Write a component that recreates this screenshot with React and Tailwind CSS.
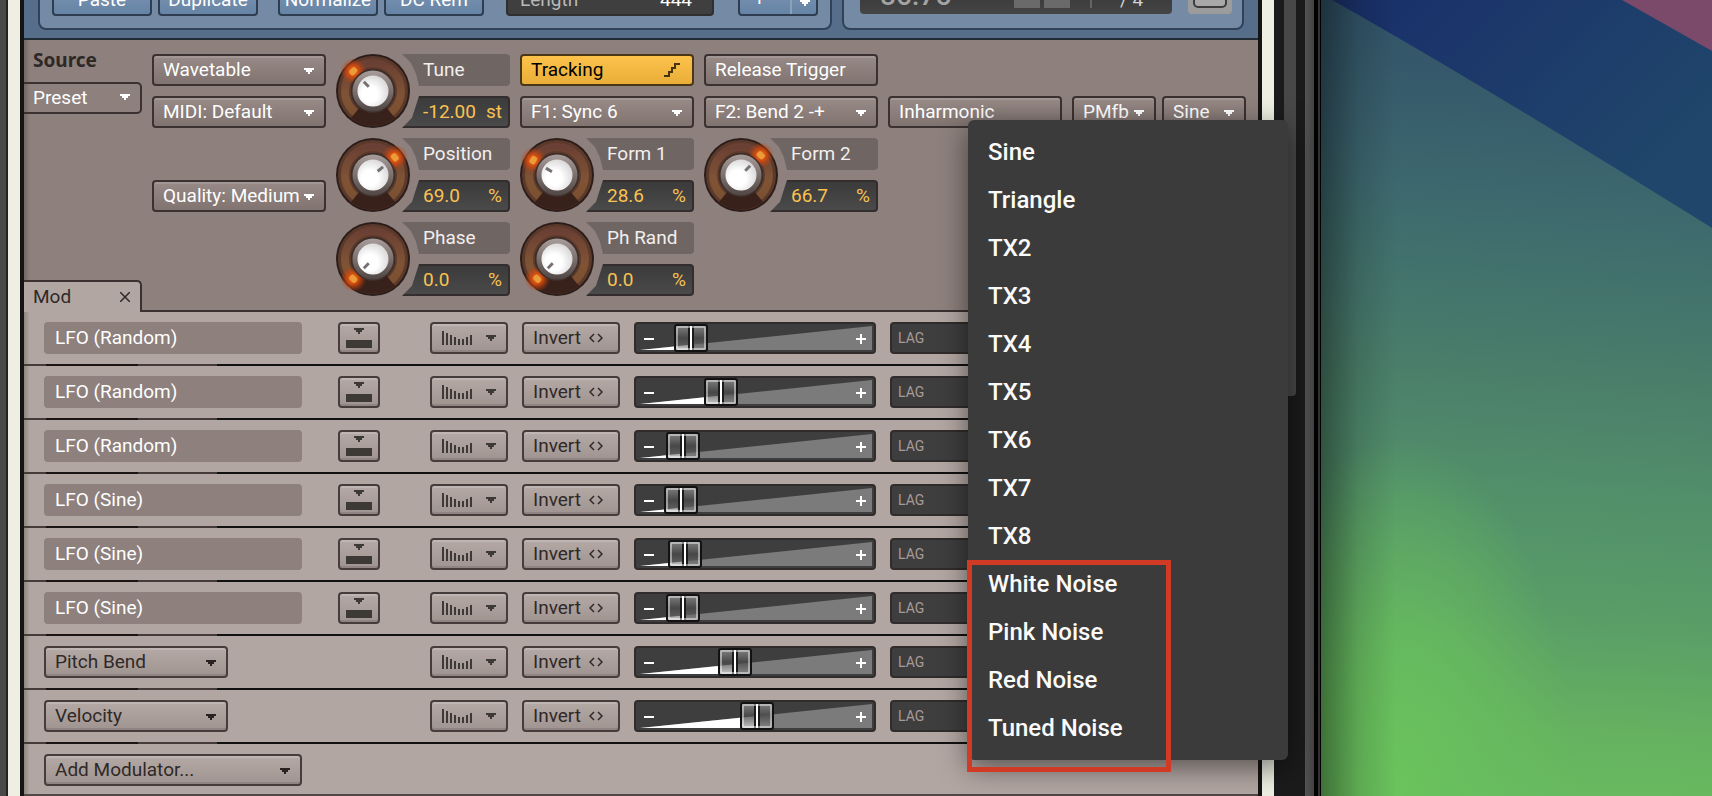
import React, { useState } from 'react';
import { clsx } from 'clsx';

const MENU_ITEMS = [
    'Sine', 'Triangle', 'TX2', 'TX3', 'TX4', 'TX5', 'TX6', 'TX7', 'TX8',
    'White Noise', 'Pink Noise', 'Red Noise', 'Tuned Noise',
];

// amount runs from 0 to 208, one step for each pixel of thumb travel
const MODULATORS = [
    { id: 'mod1', name: 'LFO (Random)', internal: true, amount: 40 },
    { id: 'mod2', name: 'LFO (Random)', internal: true, amount: 70 },
    { id: 'mod3', name: 'LFO (Random)', internal: true, amount: 32 },
    { id: 'mod4', name: 'LFO (Sine)', internal: true, amount: 30 },
    { id: 'mod5', name: 'LFO (Sine)', internal: true, amount: 34 },
    { id: 'mod6', name: 'LFO (Sine)', internal: true, amount: 32 },
    { id: 'mod7', name: 'Pitch Bend', internal: false, amount: 84 },
    { id: 'mod8', name: 'Velocity', internal: false, amount: 106 },
];

const DARK_BUTTON = 'rounded-[4px] border-2 border-[#3b3130] bg-linear-to-b from-[#978a87] to-[#807370] text-white shadow-[inset_0_2px_0_#ffffff1f]';
const LIGHT_BUTTON = 'rounded-[4px] border-2 border-[#463d3b] bg-linear-to-b from-[#b5a9a6] to-[#a09491] text-[#2f2927] shadow-[inset_0_2px_0_#ffffff26,inset_0_-2px_0_#0000001a]';

const Arrow = ({ className }) => (
    <svg className={className} width="10" height="6" viewBox="0 0 10 6" fill="currentColor" aria-hidden="true">
        <path d="M0 0H10V2H8V4H6V6H4V4H2V2H0Z" />
    </svg>
);

const Dropdown = ({ label, value, light, className }) => (
    <div className={clsx('relative h-8', className)}>
        <select
            aria-label={label}
            defaultValue={value}
            className={clsx('block h-8 w-full appearance-none pl-[9px] outline-none', light ? LIGHT_BUTTON : DARK_BUTTON)}
        >
            <option>{value}</option>
        </select>
        <Arrow className={clsx('pointer-events-none absolute right-3 top-[14px]', light ? 'text-[#2a2221]' : 'text-white')} />
    </div>
);

const KnobDial = ({ angle }) => {
    const rad = (angle * Math.PI) / 180;
    const x = 37 + 28 * Math.sin(rad);
    const y = 37 - 28 * Math.cos(rad);
    return (
        <svg className="relative z-10 shrink-0" width="74" height="74" viewBox="0 0 74 74" aria-hidden="true">
            <defs>
                <linearGradient id="ring" x1="0" y1="0" x2="0" y2="1">
                    <stop offset="0" stopColor="#6b4034" />
                    <stop offset="0.6" stopColor="#7f5435" />
                    <stop offset="1" stopColor="#7a4f30" />
                </linearGradient>
                <linearGradient id="collar" x1="0" y1="0" x2="0" y2="1">
                    <stop offset="0" stopColor="#a89d9b" />
                    <stop offset="1" stopColor="#4f4543" />
                </linearGradient>
                <radialGradient id="cap" cx="0.4" cy="0.6" r="0.65">
                    <stop offset="0.4" stopColor="#ffffff" />
                    <stop offset="1" stopColor="#d8d6d6" />
                </radialGradient>
                <radialGradient id="glow">
                    <stop offset="0" stopColor="#f58a28" />
                    <stop offset="0.4" stopColor="#dd4e0e" stopOpacity="0.9" />
                    <stop offset="1" stopColor="#c23a08" stopOpacity="0" />
                </radialGradient>
            </defs>
            <circle cx="37" cy="37" r="37" fill="#2c1d1a" />
            <circle cx="37" cy="37" r="28.5" fill="none" stroke="#5c3a2b" strokeWidth="13" />
            <circle cx="37" cy="37" r="28" fill="none" stroke="url(#ring)" strokeWidth="8" />
            <path d="M37 37L15 64A35 35 0 0 0 59 64Z" fill="#38211a" />
            <circle cx={x} cy={y} r="13" fill="url(#glow)" />
            <rect x={x - 4} y={y - 3} width="8" height="6" rx="2" fill="#eb9c38" transform={`rotate(${angle} ${x} ${y})`} />
            <circle cx="37" cy="37" r="22" fill="#3f302b" />
            <circle cx="37" cy="37" r="20.5" fill="url(#collar)" />
            <circle cx="37" cy="37" r="15.5" fill="url(#cap)" />
            <path d="M37 24V31" stroke="#777070" strokeWidth="3" transform={`rotate(${angle} 37 37)`} />
        </svg>
    );
};

const Knob = ({ id, label, value, unit, angle, className }) => (
    <div className={clsx('row-span-2 flex', className)}>
        <KnobDial angle={angle} />
        <div className="-ml-2 flex flex-1 flex-col gap-2.5">
            <label
                htmlFor={id}
                className="h-8 rounded-r-sm bg-[#6f6563] pl-[21px] leading-8 text-[#f2efee] [clip-path:polygon(0_0,100%_0,100%_100%,17px_100%,14px_62%,9px_28%)]"
            >
                {label}
            </label>
            <div className="flex h-8 items-center rounded-r-sm border-2 border-l-0 border-[#332e2d] bg-linear-to-b from-[#3b3b3b] to-[#4a4a4a] pl-[21px] pr-1.5 text-[#fac251] [clip-path:polygon(17px_0,100%_0,100%_100%,0_100%,10px_68%)]">
                <input id={id} defaultValue={value} className="w-0 flex-1 bg-transparent outline-none" />
                <span>{unit}</span>
            </div>
        </div>
    </div>
);

const AmountSlider = ({ name, initial }) => {
    const [amount, setAmount] = useState(initial);
    const x = amount + 17;
    const y = 28 - ((x - 6) * 24) / 232;
    return (
        <div className="relative h-8 rounded-sm border-2 border-[#302c2b] bg-[#3e3e3e]">
            <svg className="absolute -left-0.5 -top-0.5" width="242" height="32" viewBox="0 0 242 32" aria-hidden="true">
                <path d="M6 28L238 4V28Z" fill="#7b7b7b" />
                <path d={`M6 28L${x} ${y}V28Z`} fill="#fff" />
                <path d="M10 17H20M222 17H232M227 12V22" stroke="#fff" strokeWidth="2" />
            </svg>
            <input
                type="range"
                min="0"
                max="208"
                value={amount}
                onChange={(e) => setAmount(Number(e.target.value))}
                aria-label={`${name} amount`}
                className="absolute -left-0.5 -top-0.5 h-8 w-[242px] appearance-none bg-transparent outline-none [&::-webkit-slider-thumb]:h-7 [&::-webkit-slider-thumb]:w-[34px] [&::-webkit-slider-thumb]:appearance-none [&::-webkit-slider-thumb]:rounded-[3px] [&::-webkit-slider-thumb]:border-2 [&::-webkit-slider-thumb]:border-[#121212] [&::-webkit-slider-thumb]:bg-[linear-gradient(90deg,#0000_12px,#1a1a1a_12px_14px,#fff_14px_16px,#1a1a1a_16px_18px,#0000_18px),linear-gradient(180deg,#7e7e7e_0,#4a4a4acc_50%,#8c8c8c80_100%)] [&::-webkit-slider-thumb]:shadow-[inset_0_0_0_2px_#ffffff73]"
            />
        </div>
    );
};

const ModRow = ({ mod }) => (
    <div>
        <div className="grid grid-cols-[280px_78px_78px_98px_242px_1fr] gap-x-3.5 px-5 py-2.5">
            {mod.internal ? (
                <div className="h-8 w-[258px] rounded-sm bg-[#8d807d] pl-[11px] leading-8 text-white">{mod.name}</div>
            ) : (
                <Dropdown light label="Modulator" value={mod.name} className="w-46" />
            )}
            <div>
                {mod.internal && (
                    <button type="button" aria-label={`Show ${mod.name}`} className={clsx('flex h-8 w-[42px] flex-col items-center gap-1.5 pt-1', LIGHT_BUTTON)}>
                        <Arrow className="text-[#3d3935]" />
                        <span className="h-2 w-[26px] bg-[#3d3935]" />
                    </button>
                )}
            </div>
            <button type="button" aria-label="Shaper" className={clsx('flex h-8 items-center justify-between px-2.5', LIGHT_BUTTON)}>
                <svg width="30" height="14" viewBox="0 0 30 14" aria-hidden="true">
                    <path d="M1 14V0M5 14V2M9 14V4M13 14V6M17 14V8M21 14V8M25 14V6M29 14V4" stroke="#3d3935" strokeWidth="2" />
                </svg>
                <Arrow className="text-[#3d3935]" />
            </button>
            <button type="button" className={clsx('flex h-8 items-center gap-2 pl-[9px]', LIGHT_BUTTON)}>
                Invert
                <svg width="14" height="10" viewBox="0 0 14 10" fill="none" stroke="#2f2927" strokeWidth="1.5" aria-hidden="true">
                    <path d="M5 1L1 5L5 9M9 1L13 5L9 9" />
                </svg>
            </button>
            <AmountSlider name={mod.name} initial={mod.amount} />
            <div className="h-8 rounded-sm border-2 border-[#302c2b] bg-[#3e3e3e] pl-1.5 text-sm/7 text-[#a89b97]">LAG</div>
        </div>
        <div className="h-0.5 bg-[linear-gradient(90deg,#453c3a_22px,#1a1514_22px_114px,#453c3a_114px_193px,#111_193px)]" />
    </div>
);

const HeaderButton = ({ children }) => (
    <button type="button" className="h-8 w-25 rounded-[4px] border-2 border-[#2e3e50] bg-linear-to-b from-[#7d94b1] to-[#6684a6] text-white">
        {children}
    </button>
);

const Toolbar = () => (
    <header className="flex h-10 items-end gap-2.5 overflow-hidden border-b-2 border-[#222c37] bg-[#576e8b] pb-2 pl-3.5 pr-3.5">
        <div className="flex h-14 w-[794px] shrink-0 items-end rounded-lg border-2 border-[#2f4259] bg-[#758ba5] pb-3 pl-3">
            <div className="flex gap-1.5">
                <HeaderButton>Paste</HeaderButton>
                <HeaderButton>Duplicate</HeaderButton>
            </div>
            <div className="ml-5 flex gap-1.5">
                <HeaderButton>Normalize</HeaderButton>
                <HeaderButton>DC Rem</HeaderButton>
            </div>
            <div className="ml-[22px] flex h-8 w-[208px] items-center justify-between rounded-sm border-2 border-[#302f30] bg-[#3f3f3f] pl-3 pr-5 text-[#b9b9b9]">
                <span>Length</span>
                <span className="text-white">444</span>
            </div>
            <button type="button" aria-label="Zoom" className="ml-6 flex h-8 w-20 items-center justify-between rounded-[4px] border-2 border-[#2e3e50] bg-linear-to-b from-[#7d94b1] to-[#6684a6] pl-3.5 pr-1.5 text-white">
                <span>+</span>
                <span className="flex h-full items-end border-l-2 border-[#8ba0ba] pb-2 pl-2">
                    <Arrow />
                </span>
            </button>
        </div>
        <div className="flex h-14 flex-1 items-end justify-between rounded-lg border-2 border-[#2f4259] bg-[#758ba5] pb-3.5 pl-4 pr-2.5">
            <div className="flex h-10 w-[312px] items-end rounded-sm bg-linear-to-b from-[#2f2f2f] to-[#454545] pb-1.5 pl-5">
                <span className="w-[134px] text-[28px]/6 font-medium text-[#a3a3a3]">86.75</span>
                <span className="h-6 w-[26px] bg-[#6a6a6a]" />
                <span className="ml-1 h-6 w-[26px] bg-[#6a6a6a]" />
                <span className="ml-5 h-6 w-0.5 bg-[#656565]" />
                <span className="ml-7 leading-4 text-[#d0d0d0]">/ 4</span>
            </div>
            <button type="button" aria-label="Keyboard" className="flex h-8 w-11 items-end justify-center rounded-sm bg-[#9c9c9c] pb-1.5">
                <span className="h-6 w-[34px] rounded-[5px] border-2 border-[#3d3d3d] bg-[#a8a8a8]" />
            </button>
        </div>
    </header>
);

const WaveMenu = () => (
    <div className="absolute -left-[194px] top-6 z-20 w-80 rounded-md bg-[#3b3b3b] py-2 shadow-[0_8px_28px_#00000080]">
        <ul role="menu">
            {MENU_ITEMS.map((item) => (
                <li key={item} role="none">
                    <button type="button" role="menuitem" className="block h-12 w-full pl-5 text-left text-2xl font-medium text-[#fafafa]">
                        {item}
                    </button>
                </li>
            ))}
        </ul>
        {/* Highlight round the noise sources */}
        <div className="pointer-events-none absolute -left-px top-[440px] h-[212px] w-[204px] border-[5px] border-[#d13b25]" />
    </div>
);

const SourcePanel = () => (
    <section className="flex bg-[#8d807d] bg-[linear-gradient(90deg,#00000033_0,#00000000_6px)]">
        <div className="flex w-[118px] shrink-0 flex-col">
            <h2 className="pl-[9px] pt-2 font-['Noto_Sans'] font-bold leading-6 text-[#2f2826]">Source</h2>
            <div className="relative mt-2.5 h-8">
                <select aria-label="Preset" defaultValue="Preset" className="block h-8 w-full appearance-none rounded-r-[5px] border-2 border-l-0 border-[#3b3130] bg-transparent pl-[9px] text-white outline-none">
                    <option>Preset</option>
                </select>
                <Arrow className="pointer-events-none absolute right-3 top-3 text-white" />
            </div>
            <div className="mt-auto flex h-8 items-center justify-between rounded-tr-[5px] border-r-2 border-t-2 border-[#3b3130] bg-[#b2a6a2] pl-[9px] pr-2.5 text-[#2f2927]">
                <span>Mod</span>
                <button type="button" aria-label="Close Mod">
                    <svg width="10" height="10" viewBox="0 0 10 10" stroke="#2f2927" strokeWidth="1.5" aria-hidden="true">
                        <path d="M0 0L10 10M10 0L0 10" />
                    </svg>
                </button>
            </div>
        </div>
        <div className="flex-1 border-b-2 border-[#3b3130] pb-3.5 pl-2.5 pt-3.5">
            <div className="grid auto-rows-[32px] grid-cols-[repeat(5,174px)_auto] gap-2.5">
                <Dropdown label="Source type" value="Wavetable" className="col-start-1 row-start-1" />
                <Dropdown label="MIDI" value="MIDI: Default" className="col-start-1 row-start-2" />
                <Dropdown label="Quality" value="Quality: Medium" className="col-start-1 row-start-4" />
                <Knob id="tune" label="Tune" value="-12.00" unit="st" angle={-45} className="col-start-2 row-start-1" />
                <Knob id="position" label="Position" value="69.0" unit="%" angle={51} className="col-start-2 row-start-3" />
                <Knob id="phase" label="Phase" value="0.0" unit="%" angle={-135} className="col-start-2 row-start-5" />
                <button type="button" className="col-start-3 row-start-1 flex items-center justify-between rounded-[4px] border-2 border-[#4a3718] bg-linear-to-b from-[#fcc24a] to-[#e9ae39] pl-[9px] pr-3 text-black">
                    Tracking
                    <svg width="16" height="14" viewBox="0 0 16 14" fill="none" stroke="#46330f" strokeWidth="2" aria-hidden="true">
                        <path d="M0 13H5V9H8V5H11V1H16" />
                    </svg>
                </button>
                <Dropdown label="Form 1 mode" value="F1: Sync 6" className="col-start-3 row-start-2" />
                <Knob id="form1" label="Form 1" value="28.6" unit="%" angle={-58} className="col-start-3 row-start-3" />
                <Knob id="phrand" label="Ph Rand" value="0.0" unit="%" angle={-135} className="col-start-3 row-start-5" />
                <button type="button" className={clsx('col-start-4 row-start-1 pl-[9px] text-left', DARK_BUTTON)}>Release Trigger</button>
                <Dropdown label="Form 2 mode" value="F2: Bend 2 -+" className="col-start-4 row-start-2" />
                <Knob id="form2" label="Form 2" value="66.7" unit="%" angle={45} className="col-start-4 row-start-3" />
                <button type="button" className={clsx('col-start-5 row-start-2 pl-[9px] text-left', DARK_BUTTON)}>Inharmonic</button>
                <div className="col-start-6 row-start-2 flex gap-1.5">
                    <Dropdown label="Inharmonic mode" value="PMfb" className="w-21" />
                    <div className="relative">
                        <Dropdown label="Inharmonic wave" value="Sine" className="w-21" />
                        <WaveMenu />
                    </div>
                </div>
            </div>
        </div>
    </section>
);

const Wallpaper = () => (
    <div className="relative w-[391px] shrink-0 overflow-hidden bg-[linear-gradient(184deg,#2f4f66_0%,#39606d_18%,#41706d_33%,#4a7d6a_46%,#52906a_62%,#5a9d67_76%,#65b260_90%,#69bb60_100%)]">
        <svg className="absolute inset-0 h-full w-full" viewBox="0 0 391 796" preserveAspectRatio="none" aria-hidden="true">
            <defs>
                <linearGradient id="band" x1="0" y1="0" x2="1" y2="0.6">
                    <stop offset="0.1" stopColor="#1a316a" />
                    <stop offset="1" stopColor="#20476b" />
                </linearGradient>
                <radialGradient id="green" cx="0.2" cy="1" r="0.45">
                    <stop offset="0" stopColor="#6ac35c" />
                    <stop offset="0.4" stopColor="#68bf5d" stopOpacity="0.8" />
                    <stop offset="1" stopColor="#68bf5d" stopOpacity="0" />
                </radialGradient>
                <linearGradient id="edge">
                    <stop offset="0" stopColor="#000" stopOpacity="0.4" />
                    <stop offset="0.5" stopColor="#000" stopOpacity="0.12" />
                    <stop offset="1" stopColor="#000" stopOpacity="0" />
                </linearGradient>
            </defs>
            <rect width="391" height="796" fill="url(#green)" />
            <path d="M11 0Q150 78 391 228V0Z" fill="url(#band)" />
            <path d="M301 0L391 51V0Z" fill="#7b4a6b" />
            <rect width="75" height="796" fill="url(#edge)" />
        </svg>
    </div>
);

export default function App() {
    return (
        <div className="flex min-h-screen bg-[#1b1b1b] font-[Roboto,sans-serif] text-[19px] leading-6">
            <div className="w-2 shrink-0 border-r-2 border-[#222] bg-[#484848]" />
            <main className="min-w-0 flex-1 border-x-12 border-[#eeefe2]">
                <div className="min-h-full border-x-4 border-[#141414] bg-[#b2a6a2]">
                    <Toolbar />
                    <SourcePanel />
                    <section className="border-b-2 border-[#514846] bg-[linear-gradient(90deg,#00000033_0,#00000000_6px)]">
                        {MODULATORS.map((mod) => (
                            <ModRow key={mod.id} mod={mod} />
                        ))}
                        <div className="px-5 pb-2 pt-2.5">
                            <Dropdown light label="Add modulator" value="Add Modulator..." className="w-[258px]" />
                        </div>
                    </section>
                </div>
            </main>
            {/* Scroll bar and right window edge */}
            <div className="w-[31px] shrink-0 pl-2.5">
                <div className="h-99 w-3 rounded-b-[4px] bg-[#484848]" />
            </div>
            <div className="w-[13px] shrink-0 border-r-4 border-black bg-linear-to-r from-[#535353] to-[#434343]" />
            <div className="w-[3px] shrink-0 border-r border-black bg-[#333]" />
            <Wallpaper />
        </div>
    );
}
